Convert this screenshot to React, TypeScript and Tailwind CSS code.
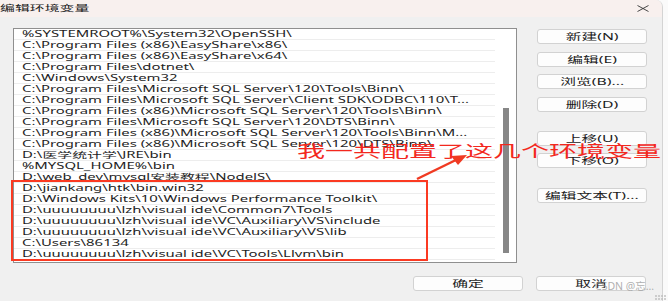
import type { ReactNode } from "react";

const paths = [
  "%SYSTEMROOT%\\System32\\OpenSSH\\",
  "C:\\Program Files (x86)\\EasyShare\\x86\\",
  "C:\\Program Files (x86)\\EasyShare\\x64\\",
  "C:\\Program Files\\dotnet\\",
  "C:\\Windows\\System32",
  "C:\\Program Files\\Microsoft SQL Server\\120\\Tools\\Binn\\",
  "C:\\Program Files\\Microsoft SQL Server\\Client SDK\\ODBC\\110\\T...",
  "C:\\Program Files (x86)\\Microsoft SQL Server\\120\\Tools\\Binn\\",
  "C:\\Program Files\\Microsoft SQL Server\\120\\DTS\\Binn\\",
  "C:\\Program Files (x86)\\Microsoft SQL Server\\120\\Tools\\Binn\\M...",
  "C:\\Program Files (x86)\\Microsoft SQL Server\\120\\DTS\\Binn\\",
  "D:\\医学统计学\\JRE\\bin",
  "%MYSQL_HOME%\\bin",
  "D:\\web_dev\\mysql安装教程\\NodeJS\\",
  "D:\\jiankang\\htk\\bin.win32",
  "D:\\Windows Kits\\10\\Windows Performance Toolkit\\",
  "D:\\uuuuuuuu\\lzh\\visual ide\\Common7\\Tools",
  "D:\\uuuuuuuu\\lzh\\visual ide\\VC\\Auxiliary\\VS\\include",
  "D:\\uuuuuuuu\\lzh\\visual ide\\VC\\Auxiliary\\VS\\lib",
  "C:\\Users\\86134",
  "D:\\uuuuuuuu\\lzh\\visual ide\\VC\\Tools\\Llvm\\bin",
];

// the screenshot is stretched sideways, so text is widened with scale-x
function Stretch({ children, center }: { children: ReactNode; center?: boolean }) {
  return (
    <span
      className={
        center
          ? "inline-block origin-center scale-x-[1.75] whitespace-nowrap"
          : "inline-block origin-left scale-x-[1.75] whitespace-nowrap"
      }
    >
      {children}
    </span>
  );
}

function DialogButton({ label, className }: { label: string; className?: string }) {
  return (
    <button
      type="button"
      className={`flex h-[15px] w-[110px] items-center justify-center rounded-[3px] border border-[#d2d2d2] bg-[#fdfdfd] text-[9px] leading-none text-[#1b1b1b] ${className ?? ""}`}
    >
      <Stretch center>{label}</Stretch>
    </button>
  );
}

export default function App() {
  return (
    <div className="relative h-[301px] w-[668px] overflow-hidden bg-[#fafafa] font-['Noto_Sans','Noto_Sans_CJK_SC',sans-serif]">
      <div className="flex h-full w-[663px] flex-col overflow-hidden rounded-tr-[7px] border-r border-[#d4d4d4] bg-[#f0f0f0]">
        <div className="flex h-[17px] shrink-0 items-center justify-between bg-[#f8f0ee] pr-[13px]">
          <span className="text-[8.5px] leading-none text-[#1b1b1b]">
            <Stretch>编辑环境变量</Stretch>
          </span>
          <svg width="12" height="7" viewBox="0 0 12 7" className="mt-[-1px]">
            <path d="M0.5 0.5 L11.5 6.5 M11.5 0.5 L0.5 6.5" stroke="#333" strokeWidth="0.9" fill="none" />
          </svg>
        </div>

        <div className="flex pl-[13px] pt-[11px]">
          <div className="flex h-[235px] w-[504px] border border-[#8f8f8f] bg-white">
            <div className="flex w-[481px] flex-col">
              {paths.map((path) => (
                <div
                  key={path}
                  className="flex h-[11px] shrink-0 items-center border-b border-[#ededed] pl-[8px] text-[8.5px] leading-none text-[#1e1e1e]"
                >
                  <Stretch>{path}</Stretch>
                </div>
              ))}
            </div>
            <div className="flex flex-1 justify-center pt-[79px]">
              <div className="h-[145px] w-[6px] bg-[#878787]" />
            </div>
          </div>

          <div className="ml-[20px] flex flex-col">
            <DialogButton label="新建(N)" className="mt-[1px]" />
            <DialogButton label="编辑(E)" className="mt-[8px]" />
            <DialogButton label="浏览(B)..." className="mt-[7px]" />
            <DialogButton label="删除(D)" className="mt-[8px]" />
            <DialogButton label="上移(U)" className="mt-[19px]" />
            <DialogButton label="下移(O)" className="mt-[7px]" />
            <DialogButton label="编辑文本(T)..." className="mt-[20px]" />
          </div>
        </div>

        <div className="mt-[13px] flex justify-end gap-[13px] pr-[16px]">
          <DialogButton label="确定" className="border-[1.5px] border-[#1f74c8]" />
          <DialogButton label="取消" />
        </div>
      </div>

      {/* annotation drawn over the screenshot */}
      <div className="absolute left-[11px] top-[180px] h-[81px] w-[417px] border-2 border-[#fb3a22]" />
      <svg className="absolute left-[410px] top-[150px]" width="64" height="36" viewBox="0 0 64 36">
        <path d="M7 29 L50 8" stroke="#f03a22" strokeWidth="2.5" fill="none" />
        <path d="M57 5 L41 6 L48 15 Z" fill="#f03a22" />
      </svg>
      <div className="absolute left-[297px] top-[143px] text-[16px] leading-none text-[#f3281e]">
        <Stretch>我一共配置了这几个环境变量</Stretch>
      </div>

      <div className="absolute left-[595px] top-[281px] text-[10.5px] leading-none text-[#9a9a9a]/80">
        CSDN @忘...
      </div>
      <div className="absolute bottom-[1px] right-[2px] grid grid-cols-4 gap-[1px] opacity-70">
        {Array.from({ length: 8 }, (_, i) => (
          <span key={i} className="h-[2px] w-[2px] bg-[#bdbdbd]" />
        ))}
      </div>
    </div>
  );
}
